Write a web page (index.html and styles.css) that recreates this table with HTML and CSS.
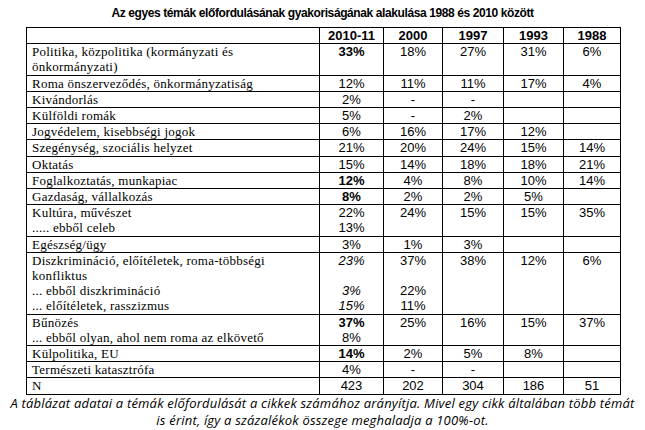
FILE: index.html
```html
<!DOCTYPE html>
<html lang="hu">
<head>
<meta charset="utf-8">
<link rel="stylesheet" href="styles.css">
</head>
<body>
<h1 class="title">Az egyes témák előfordulásának gyakoriságának alakulása 1988 és 2010 között</h1>
<table class="data">
  <colgroup>
    <col class="c-label"><col class="c1"><col class="c2"><col class="c3"><col class="c4"><col class="c5">
  </colgroup>
  <thead>
    <tr><th></th><th>2010-11</th><th>2000</th><th>1997</th><th>1993</th><th>1988</th></tr>
  </thead>
  <tbody>
    <tr><td class="lbl">Politika, közpolitika (kormányzati és<br>önkormányzati)</td><td><b>33%</b></td><td>18%</td><td>27%</td><td>31%</td><td>6%</td></tr>
    <tr><td class="lbl">Roma önszerveződés, önkormányzatiság</td><td>12%</td><td>11%</td><td>11%</td><td>17%</td><td>4%</td></tr>
    <tr><td class="lbl">Kivándorlás</td><td>2%</td><td>-</td><td>-</td><td></td><td></td></tr>
    <tr><td class="lbl">Külföldi romák</td><td>5%</td><td>-</td><td>2%</td><td></td><td></td></tr>
    <tr><td class="lbl">Jogvédelem, kisebbségi jogok</td><td>6%</td><td>16%</td><td>17%</td><td>12%</td><td></td></tr>
    <tr><td class="lbl">Szegénység, szociális helyzet</td><td>21%</td><td>20%</td><td>24%</td><td>15%</td><td>14%</td></tr>
    <tr><td class="lbl">Oktatás</td><td>15%</td><td>14%</td><td>18%</td><td>18%</td><td>21%</td></tr>
    <tr><td class="lbl">Foglalkoztatás, munkapiac</td><td><b>12%</b></td><td>4%</td><td>8%</td><td>10%</td><td>14%</td></tr>
    <tr><td class="lbl">Gazdaság, vállalkozás</td><td><b>8%</b></td><td>2%</td><td>2%</td><td>5%</td><td></td></tr>
    <tr><td class="lbl">Kultúra, művészet<br>..... ebből celeb</td><td>22%<br>13%</td><td>24%</td><td>15%</td><td>15%</td><td>35%</td></tr>
    <tr><td class="lbl">Egészség/ügy</td><td>3%</td><td>1%</td><td>3%</td><td></td><td></td></tr>
    <tr><td class="lbl">Diszkrimináció, előítéletek, roma-többségi<br>konfliktus<br>... ebből diszkrimináció<br>... előítéletek, rasszizmus</td><td><i>23%</i><br><br><i>3%</i><br><i>15%</i></td><td>37%<br><br>22%<br>11%</td><td>38%</td><td>12%</td><td>6%</td></tr>
    <tr><td class="lbl">Bűnözés<br>... ebből olyan, ahol nem roma az elkövető</td><td><b>37%</b><br>8%</td><td>25%</td><td>16%</td><td>15%</td><td>37%</td></tr>
    <tr><td class="lbl">Külpolitika, EU</td><td><b>14%</b></td><td>2%</td><td>5%</td><td>8%</td><td></td></tr>
    <tr><td class="lbl">Természeti katasztrófa</td><td>4%</td><td>-</td><td>-</td><td></td><td></td></tr>
    <tr><td class="lbl">N</td><td>423</td><td>202</td><td>304</td><td>186</td><td>51</td></tr>
  </tbody>
</table>
<p class="note">A táblázat adatai a témák előfordulását a cikkek számához arányítja. Mivel egy cikk általában több témát<br>is érint, így a százalékok összege meghaladja a 100%-ot.</p>
</body>
</html>
```
FILE: styles.css
```css
html, body {
  margin: 0;
  padding: 0;
  background: #fff;
  color: #000;
}
.title {
  margin: 0;
  padding-top: 4px;
  height: 23px;
  box-sizing: border-box;
  font-family: "Liberation Sans", Arial, sans-serif;
  font-weight: bold;
  font-size: 12px;
  letter-spacing: -0.4px;
  line-height: 18px;
  text-align: center;
}
.data {
  margin-left: 26px;
  margin-top: 4px;
  border-collapse: collapse;
  table-layout: fixed;
  width: 595px;
  font-family: "Liberation Serif", "Times New Roman", serif;
  font-size: 13px;
  line-height: 15.2px;
}
.c-label { width: 293px; }
.c1 { width: 64px; }
.c2 { width: 59px; }
.c3 { width: 61px; }
.c4 { width: 60px; }
.c5 { width: 57px; }
.data th, .data td {
  border: 1px solid #000;
  padding: 0 2px;
  vertical-align: top;
  text-align: center;
}
.data th {
  font-family: "Liberation Sans", Arial, sans-serif;
  font-weight: bold;
  font-size: 13px;
}
.data td {
  font-family: "Liberation Sans", Arial, sans-serif;
  font-size: 13px;
}
.data td.lbl {
  text-align: left;
  font-family: "Liberation Serif", "Times New Roman", serif;
  letter-spacing: 0.25px;
  padding-left: 5px;
}
.note {
  margin: 0;
  font-family: "Open Sans", sans-serif;
  font-style: italic;
  font-size: 13px;
  letter-spacing: 0.2px;
  line-height: 17px;
  text-align: center;
}
```
